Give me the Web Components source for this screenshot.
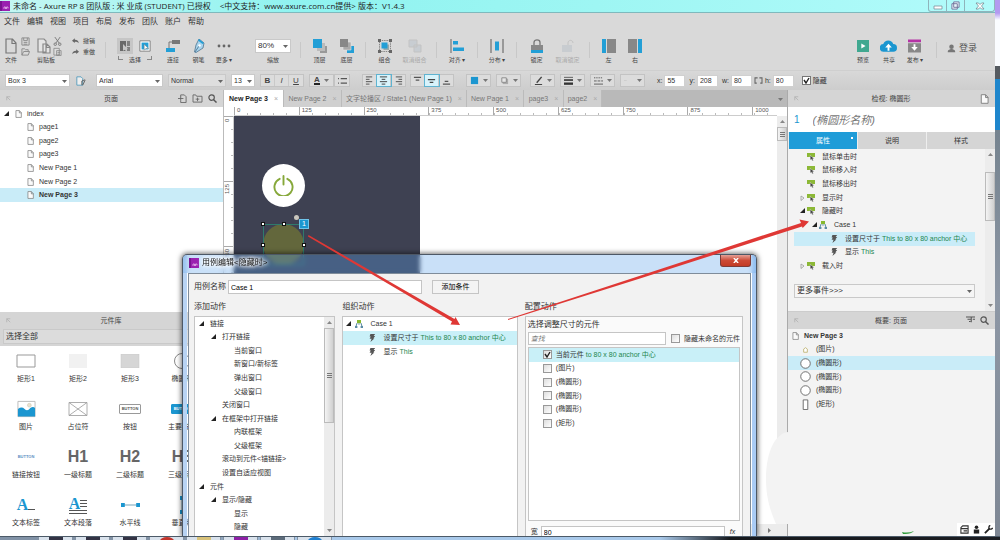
<!DOCTYPE html>
<html lang="zh-CN">
<head>
<meta charset="utf-8">
<title>未命名 - Axure RP 8</title>
<style>
  body { margin: 0; font: 7px/10px "Liberation Sans", "Noto Sans CJK SC", sans-serif; color: #333; background: #d9d9d9; }
</style>
</head>
<body>
<rp-shell></rp-shell>
<script>
const ICONS = {
  page: ['0 0 12 14', '<path d="M1.500 1h6l3.500 3.500V13h-9.500zM7.500 1v4H11" fill="#fafafa" stroke="#777" stroke-width="1.200"/>'],
  doc: ['0 0 12 16', '<path d="M1 1h6.500L11 5v10H1zM7 1v4.500h4" fill="none" stroke="#777" stroke-width="1.200"/>'],
  save: ['0 0 10 10', '<path d="M1 1h8v8H1zM3 1v3h4V1M3 6h4M3 8h4" fill="none" stroke="#888"/>'],
  open: ['0 0 10 10', '<path d="M1 9V2h3l1 1h3v2M1 9l2-4h6.500L8 9z" fill="none" stroke="#888"/>'],
  clip: ['0 0 14 16', '<path d="M1 1h6l2 2v11H1zM6 6h4l3 3v6H6zM9.500 6v3.500H13" fill="#e4e4e4" stroke="#888" stroke-width="1.200"/>'],
  cut: ['0 0 10 10', '<path d="M2 0l5 7M8 0L3 7" stroke="#777"/><circle cx="2.500" cy="8" r="1.400" fill="none" stroke="#777"/><circle cx="7.500" cy="8" r="1.400" fill="none" stroke="#777"/>'],
  paste: ['0 0 10 10', '<path d="M1 1.500h6V9H1zM4 4h5v5.500H4zM5 6h3M5 8h3" fill="#ddd" stroke="#888" stroke-width=".9"/>'],
  undo: ['0 0 10 8', '<path d="M4 0v2.200c4 0 5.500 2 5.500 5C8 5.500 7 5 4 5v2L0 3.500z" fill="#666"/>'],
  redo: ['0 0 10 8', '<path d="M6 0v2.200C2 2.200.5 4 .5 7.200 2 5.500 3 5 6 5v2l4-3.500z" fill="#666"/>'],
  selcross: ['0 0 16 16', '<path d="M0 0h16v16H0z" fill="#c6c6c6"/><path d="M3 3h6v10H3z" fill="#696969"/><path d="M10 3h3v5h-3zM10 9h3v4h-3z" fill="#808080"/><path d="M6 6l5 5-2 .3 1 2-1 .5-1-2-2 1z" fill="#c6c6c6"/>'],
  selin: ['0 0 14 14', '<path d="M1 1h12v12H1z" fill="#fff" stroke="#777"/><path d="M3 3h8v8H3z" fill="#239fd6"/><path d="M6 5l5 5H8l-2 2z" fill="#fff" stroke="#777" stroke-width=".6"/>'],
  connect: ['0 0 14 14', '<path d="M6 1h8v4H6z" fill="#777"/><path d="M0 9h9v4H0z" fill="#239fd6"/><path d="M6 3H3v6" fill="none" stroke="#777"/>'],
  pen: ['0 0 12 14', '<path d="M6 0l5 4-1 5-7 4.500L1.500 13 3 6z" fill="#a9d5ee" stroke="#5a7f99" stroke-width=".9"/><path d="M2 13l4-6" stroke="#5a7f99"/><circle cx="6.500" cy="6.500" r="1.200" fill="#fff"/><path d="M6 0l5 4-1.500 1L5 1.500z" fill="#239fd6"/>'],
  dots: ['0 0 14 4', '<circle cx="2" cy="2" r="1.400" fill="#666"/><circle cx="7" cy="2" r="1.400" fill="#666"/><circle cx="12" cy="2" r="1.400" fill="#666"/>'],
  front: ['0 0 14 14', '<path d="M7 7h7v7H7z" fill="#999"/><path d="M4 4h8v8H4z" fill="#bbb"/><path d="M0 0h9v9H0z" fill="#239fd6"/>'],
  back: ['0 0 14 14', '<path d="M7 7h7v7H7z" fill="#239fd6"/><path d="M3 3h8v8H3z" fill="#aaa" stroke="#e6e6e6" stroke-width=".6"/><path d="M0 0h8v8H0z" fill="#888"/>'],
  group: ['0 0 14 14', '<path d="M1.500 1.500h11v11h-11z" fill="none" stroke="#888" stroke-dasharray="1.500 .8"/><path d="M5.500 5.500H11V11H5.500z" fill="#9aa"/><path d="M3.500 3.500h6v6h-6z" fill="#239fd6"/><path d="M0 0h3v3H0zM11 0h3v3h-3zM0 11h3v3H0zM11 11h3v3h-3z" fill="#666"/>'],
  ungroup: ['0 0 14 14', '<path d="M1 1h8v7H1zM6 6h7v7H6z" fill="#c8cdd2" stroke="#c3c3c3"/>'],
  align: ['0 0 14 14', '<path d="M1 0v14" stroke="#777" stroke-width="1.200"/><path d="M3 2h5v3.500H3zM3 8.500h11V12H3z" fill="#239fd6"/>'],
  dist: ['0 0 14 14', '<path d="M1 0v14M13 0v14" stroke="#777" stroke-width="1.300"/><path d="M5 2.500h4v9H5z" fill="#239fd6"/>'],
  lock: ['0 0 12 14', '<path d="M3 7V3.500C3 0 9 0 9 3.500V7" fill="none" stroke="#777" stroke-width="1.300"/><path d="M0 6h12v5H0z" fill="#888"/><path d="M0 11h12v3H0z" fill="#239fd6"/>'],
  unlock: ['0 0 14 14', '<path d="M7 7V4c0-3.500 5-3.500 5 0" fill="none" stroke="#c3c3c3"/><path d="M1 6h10v7H1z" fill="#c8ccd0"/>'],
  left: ['0 0 14 14', '<path d="M0 0h4v14H0z" fill="#239fd6"/><path d="M5 0h9v14H5z" fill="#888"/>'],
  right: ['0 0 14 14', '<path d="M10 0h4v14h-4z" fill="#239fd6"/><path d="M0 0h9v14H0z" fill="#888"/>'],
  play: ['0 0 14 14', '<path d="M0 0h14v14H0z" fill="#40a890"/><path d="M5 4l5 3-5 3z" fill="#fff"/>'],
  cloud: ['0 0 18 14', '<path d="M4 13a4 4 0 0 1-.5-8A5.500 5.500 0 0 1 14 5a4 4 0 0 1 0 8z" fill="#1b96d0"/><path d="M9 4.500l3.500 4H10V12H8V8.500H5.500z" fill="#fff"/>'],
  publish: ['0 0 14 14', '<path d="M0 0h14v3H0z" fill="#b533a5"/><path d="M0 4h14v10H0z" fill="#888"/><path d="M6 5h2v3h2.500L7 12 3.500 8H6z" fill="#fff"/>'],
  user: ['0 0 12 12', '<circle cx="6" cy="3.500" r="3" fill="#777"/><path d="M1 11c0-3.500 2-3.500 4-4.500h2c2 1 4 1 4 4.500z" fill="#777"/>'],
  style: ['0 0 12 12', '<path d="M1 1h5l2 2v8H1z" fill="#eee" stroke="#4a98bb"/><path d="M7 11V6l4-1.500M11 5L8 11" fill="none" stroke="#555"/>'],
  swatch: ['0 0 10 10', '<path d="M1 1h8v8H1z" fill="#1b96d0"/>'],
  shadow: ['0 0 10 10', '<path d="M3 3h6v6H3z" fill="#aaa"/><path d="M2 2h5v5H2z" fill="#e6e6e6" stroke="#888"/>'],
  pencil: ['0 0 10 10', '<path d="M1 9.500h8" stroke="#444" stroke-width="1.200"/><path d="M3 7.500L8.500 1" stroke="#444" stroke-width="1.600"/>'],
  weight: ['0 0 10 10', '<path d="M0 1.500h10" stroke="#555"/><path d="M0 4.500h10" stroke="#444" stroke-width="2"/><path d="M0 8.500h10" stroke="#333" stroke-width="2.600"/>'],
  dash: ['0 0 10 10', '<path d="M0 2h10" stroke="#555" stroke-dasharray="1.500 1"/><path d="M0 5.500h10" stroke="#555" stroke-dasharray="3 1"/><path d="M0 9h10" stroke="#555"/>'],
  none: ['0 0 10 10', '<path d="M0 5h3" stroke="#ccc"/>'],
  bullets: ['0 0 10 10', '<path d="M0 3h1M0 8h1M3 3h7M3 8h7" stroke="#555" stroke-width="1.300"/>'],
  al: ['0 0 10 10', '<path d="M1 1h7M1 3.700h4M1 6.300h7M1 9h4" stroke="#555" stroke-width="1.100"/>'],
  ac: ['0 0 10 10', '<path d="M1 1h8M3 3.700h4M1 6.300h8M3 9h4" stroke="#444" stroke-width="1.100"/>'],
  ar: ['0 0 10 10', '<path d="M2 1h7M5 3.700h4M2 6.300h7M5 9h4" stroke="#555" stroke-width="1.100"/>'],
  vt: ['0 0 10 10', '<path d="M1 1.500h8M3 4.500h4" stroke="#555" stroke-width="1.300"/>'],
  vm: ['0 0 10 10', '<path d="M1 4h8M3 7h4" stroke="#444" stroke-width="1.300"/>'],
  vb: ['0 0 10 10', '<path d="M3 6h4M1 9h8" stroke="#555" stroke-width="1.300"/>'],
  link: ['0 0 10 8', '<path d="M3 1H1v6h2M7 1h2v6H7M3 1h1M6 1h1" fill="none" stroke="#666" stroke-width="1.200"/>'],
  search: ['0 0 10 10', '<circle cx="4" cy="4" r="3" fill="none" stroke="#555" stroke-width="1.300"/><path d="M6 6l3.500 3.500" stroke="#555" stroke-width="1.600"/>'],
  addpage: ['0 0 10 10', '<path d="M3 1h4l2 2v6.500H3V7M3 3.500V1" fill="none" stroke="#666"/><path d="M0 5h6M3 3v4" stroke="#666"/>'],
  addfolder: ['0 0 12 10', '<path d="M1 9V1h3l1 1.500h6V9z" fill="none" stroke="#666"/><path d="M4 5.700h4M6 4v4" stroke="#666"/>'],
  filter: ['0 0 12 10', '<path d="M0 1h12M2 4h5M7 1v7M9 4h3M4 7h2" stroke="#555" stroke-width="1.400"/>'],
  collapse: ['0 0 8 8', '<path d="M2 6V2h4M2 2l4 4" fill="none" stroke="#b4b4b4"/>'],
  event: ['0 0 10 10', '<path d="M0 0h10v5H0z" fill="#8cb836"/><path d="M4 3l5 4-2 .3 1 2-1.500.5-1-2-1.500 1z" fill="#444" stroke="#f3f3f3" stroke-width=".5"/>'],
  case: ['0 0 10 10', '<path d="M2.500 0h5v4h-5z" fill="#86b82e"/><path d="M2.500 4L1 9M7.500 4L9 9M5 4v2" stroke="#5b8ba5" stroke-width="1.300"/><path d="M0 7.500h3V10H0zM7 7.500h3V10H7z" fill="#5b8ba5"/>'],
  bolt: ['0 0 10 10', '<path d="M3 0h6L7 2.500h2L6.500 5.500H8L3 10l1.500-4H2l1.500-3H2z" fill="#555"/>'],
  circle: ['0 0 12 12', '<circle cx="6" cy="6" r="5.200" fill="#fff" stroke="#666"/>'],
  rect: ['0 0 12 12', '<path d="M3.500 1h5v10.500h-5z" fill="#fff" stroke="#666"/>'],
  home: ['0 0 12 12', '<path d="M4 9V5.500L6 4l2 1.500V9z" fill="#fff" stroke="#c2b77a"/>'],
  card: ['0 0 10 10', '<path d="M1 3l2-2h6v8H1zM1 4h8M4 6.500h4" fill="none" stroke="#333" stroke-width="1.200"/>'],
  person: ['0 0 10 10', '<circle cx="5" cy="2.500" r="2" fill="#222"/><path d="M2 5h6v4.500H2z" fill="#222"/>'],
  wrench: ['0 0 10 10', '<path d="M1 9l5-5" stroke="#222" stroke-width="2"/><path d="M7 .5C5 1 5 4 6.500 4.500S9.500 4 9.500 3" fill="none" stroke="#222" stroke-width="1.500"/>'],
  logo: ['0 0 10 10', '<path d="M0 0h10v10H0z" fill="#9a21b0"/><path d="M0 0h2v10H0z" fill="#7a1590"/><path d="M4 8V6h1.500v2M6.500 8V6H8v1.500" fill="none" stroke="#e7b8ee" stroke-width=".8"/>'],
  wBox1: ['0 0 20 14', '<path d="M1 1h18v12H1z" fill="#fff" stroke="#999"/>'],
  wBox2: ['0 0 20 14', '<path d="M1 0h18v14H1z" fill="#f1f1f1"/>'],
  wBox3: ['0 0 20 14', '<path d="M1 0h18v14H1z" fill="#d6d6d6" stroke="#c4c4c4" stroke-width=".5"/>'],
  wOval: ['0 0 20 16', '<circle cx="10" cy="8" r="7.500" fill="#fff" stroke="#888"/>'],
  wImage: ['0 0 20 18', '<path d="M1 1h18v16H1z" fill="#fff" stroke="#bbb"/><circle cx="13" cy="5" r="2" fill="#e9e2cf" stroke="#c9c0a8" stroke-width=".5"/><path d="M1 17v-8q4-3 7 0t6-1q3-2 5 0v9z" fill="#1b96d0"/>'],
  wHold: ['0 0 20 14', '<path d="M1 .5h18v13H1zM1 .5l18 13M19 .5L1 13.500" fill="#fff" stroke="#999" stroke-width=".8"/>'],
  wLine: ['0 0 20 6', '<path d="M2 3h16" stroke="#6f9fb5"/><path d="M0 1h4v4H0zM16 1h4v4h-4z" fill="#1b96d0"/>'],
  wVert: ['0 0 20 18', '<path d="M10 1v16" stroke="#6f9fb5"/><path d="M8 0h4v4H8zM8 14h4v4H8z" fill="#1b96d0"/>'],
  power: ['0 0 22 22', '<path d="M7 4a9.500 9.500 0 1 0 8 0" fill="none" stroke="#86a83a" stroke-width="2" stroke-linecap="round"/><path d="M11 1v9" stroke="#86a83a" stroke-width="2" stroke-linecap="round"/>'],
  min: ['0 0 10 8', '<path d="M1 4h8v3H1z" fill="#fff" stroke="#7f8f9a" stroke-width=".8"/>'],
  restore: ['0 0 10 10', '<path d="M3 1h6v6H3zM1 3h6v6H1z" fill="#e7f7fb" stroke="#716f98"/>'],
  close: ['0 0 10 8', '<path d="M1 1h2.500L5 2.500 6.500 1H9L6.500 4 9 7H6.500L5 5.500 3.500 7H1l2.500-3z" fill="#fff" stroke="#6a7f88" stroke-width=".7"/>'],
  closew: ['0 0 10 8', '<path d="M1.500 1h2L5 2.500 6.500 1h2L6.300 4l2.200 3h-2L5 5.500 3.500 7h-2l2.200-3z" fill="#fff"/>']
};

/* Registers an element whose shadow root is built from its styles and its markup. */
function element(name, css, markup) {
  customElements.define(name, class extends HTMLElement {
    connectedCallback() {
      if (this.shadowRoot) return;
      const t = document.createElement('template');
      const a = (k, d = '') => this.getAttribute(k) ?? d;
      t.innerHTML = `<style>*{box-sizing:border-box}${css}</style>` + (typeof markup === 'function' ? markup(a) : markup);
      this.attachShadow({ mode: 'open' }).append(t.content.cloneNode(true));
    }
  });
}

element('rp-icon', `:host{display:inline-block;flex:none}svg{display:block}`,
  a => { const [vb, body] = ICONS[a('name')]; return `<svg width="${a('w', 10)}" height="${a('h', a('w', 10))}" viewBox="${vb}" aria-hidden="true">${body}</svg>`; });

element('rp-combo', `
  :host{display:block;flex:none;position:relative;height:14px}
  select{appearance:none;display:block;width:100%;height:100%;margin:0;padding:0 8px 0 2px;border:1px solid #c9c9c9;border-radius:0;background:var(--fill,#fff);font:inherit;font-size:var(--size,7px);color:#333}
  svg{position:absolute;right:3px;top:calc(50% - 1px);pointer-events:none}`,
  a => `<select aria-label="${a('label')}"><option>${a('value')}</option></select><svg width="5" height="3"><path d="M0 0h5L2.500 3z" fill="#666"/></svg>`);

element('rp-title', `
  :host{display:flex;align-items:center;height:13px;border-bottom:1px solid #7fb9bd;background:linear-gradient(90deg,#c5f7f3,#8ff3f0 30%,#9ef6f3 60%,#b2fbfb);font:8px/12px "Open Sans","Noto Sans CJK SC",sans-serif;color:#222}
  .t{margin-left:3px;white-space:pre}.s{margin-left:9px;white-space:pre}
  .b{margin-left:auto;display:flex;height:12px;border:1px solid #8fb4bb;border-top:0;border-radius:0 0 3px 3px}
  button{border:0;border-right:1px solid #8fb4bb;background:none;padding:0;width:18px;display:flex;align-items:center;justify-content:center}
  button:last-child{width:29px;border:0}`,
  `<rp-icon name="logo" w="10" h="12"></rp-icon><span class="t">未命名 - Axure RP 8 团队版 : 米 业成 (STUDENT) 已授权</span><span class="s">&lt;中文支持：www.axure.com.cn提供&gt; 版本：V1.4.3</span>
   <div class="b"><button aria-label="最小化"><rp-icon name="min" w="10" h="8"></rp-icon></button><button aria-label="还原"><rp-icon name="restore" w="9"></rp-icon></button><button aria-label="关闭"><rp-icon name="close" w="10" h="8"></rp-icon></button></div>`);

element('rp-menu', `:host{display:flex;gap:7px;padding-left:4px;height:17px;font-size:8px;line-height:17px}a{color:#333;text-decoration:none}`,
  ['文件', '编辑', '视图', '项目', '布局', '发布', '团队', '账户', '帮助'].map(m => `<a href="#">${m}</a>`).join(''));

element('rp-tool', `
  :host{flex:none;display:block}
  button{width:100%;height:28px;padding:0;border:0;background:none;font:inherit;font-size:6px;line-height:8px;color:#444;display:flex;flex-direction:column;align-items:center;justify-content:space-between;white-space:nowrap}
  :host([off]) button{color:#aaa}.i{display:flex;align-items:center;justify-content:center;flex:1}`,
  a => `<button><span class="i"><rp-icon name="${a('icon')}" w="${a('iw', 14)}" h="${a('ih', 14)}"></rp-icon></span><slot></slot></button>`);

element('rp-toolbar', `
  :host{display:flex;height:40px;padding:6px 0 6px 5px;font-size:6px;line-height:8px;color:#444}
  .sep{width:1px;height:16px;margin:6px 5px 0;background:#c8c8c8}
  .pair{width:32px;display:grid;grid-template-columns:16px 12px;grid-template-rows:10px 10px 8px;align-items:center}
  .pair .big{grid-row:1/3}.pair .l{grid-column:1/3}
  .undo{margin-left:3px;width:28px;display:grid;grid-template-rows:10px 10px;gap:1px;align-content:start}
  .undo button{display:flex;gap:4px;align-items:center;border:0;background:none;padding:0;font:inherit;color:inherit}
  .sel{width:40px;margin:0 5px 0 4px;display:grid;grid-template-columns:1fr 1fr;grid-template-rows:20px 8px;justify-items:center;align-items:center}
  .sel .l{grid-column:1/3;display:flex;gap:6px}
  .sel i{width:5px;height:4px;border:1px solid #888;border-width:0 0 1px 1px}.sel i+span+i{border-width:0 1px 1px 0}
  .zoom{width:36px;margin:0 4px 0 18px;display:flex;flex-direction:column;justify-content:space-between;align-items:center}
  rp-combo{width:100%;margin-top:3px;--size:8px}
  .sp{flex:1}
  .login{display:flex;align-items:center;gap:3px;height:24px;margin:0 18px 0 5px;padding:0;border:0;background:none;font:inherit;font-size:9px;color:#555}`,
  `<div class="pair"><rp-icon class="big" name="doc" w="12" h="16"></rp-icon><rp-icon name="save" w="9"></rp-icon><rp-icon name="open" w="9"></rp-icon><span class="l">文件</span></div>
   <div class="pair"><rp-icon class="big" name="clip" w="14" h="16"></rp-icon><rp-icon name="cut" w="9"></rp-icon><rp-icon name="paste" w="9"></rp-icon><span class="l">剪贴板</span></div>
   <div class="undo"><button><rp-icon name="undo" w="7" h="6"></rp-icon>撤销</button><button><rp-icon name="redo" w="7" h="6"></rp-icon>重做</button></div>
   <div class="sep"></div>
   <div class="sel"><rp-icon name="selcross" w="16"></rp-icon><rp-icon name="selin" w="12"></rp-icon><span class="l"><i></i><span>选择</span><i></i></span></div>
   <rp-tool style="width:26px" icon="connect">连接</rp-tool><rp-tool style="width:25px" icon="pen" iw="12">钢笔</rp-tool><rp-tool style="width:26px" icon="dots" ih="4">更多 ▾</rp-tool>
   <div class="zoom"><rp-combo label="缩放" value="80%"></rp-combo><span>缩放</span></div>
   <div class="sep"></div>
   <rp-tool style="width:27px" icon="front">顶层</rp-tool><rp-tool style="width:27px" icon="back">底层</rp-tool>
   <div class="sep"></div>
   <rp-tool style="width:27px" icon="group">组合</rp-tool><rp-tool off style="width:33px" icon="ungroup">取消组合</rp-tool>
   <div class="sep"></div>
   <rp-tool style="width:30px" icon="align">对齐 ▾</rp-tool>
   <div class="sep"></div>
   <rp-tool style="width:28px" icon="dist">分布 ▾</rp-tool>
   <div class="sep"></div>
   <rp-tool style="width:29px" icon="lock" iw="12">锁定</rp-tool><rp-tool off style="width:33px" icon="unlock">取消锁定</rp-tool>
   <div class="sep"></div>
   <rp-tool style="width:27px" icon="left">左</rp-tool><rp-tool style="width:26px" icon="right">右</rp-tool>
   <div class="sp"></div>
   <rp-tool style="width:26px" icon="play" iw="12" ih="12">预览</rp-tool><rp-tool style="width:26px" icon="cloud" iw="17">共享</rp-tool><rp-tool style="width:26px" icon="publish" iw="13">发布 ▾</rp-tool>
   <div class="sep" style="margin-left:8px"></div>
   <button class="login"><rp-icon name="user" w="9"></rp-icon>登录</button>`);

element('rp-format', `
  :host{display:flex;align-items:center;height:20px;padding:0 0 0 5px;border-top:1px solid #cfcfcf;background:linear-gradient(#d8d8d8,#cdcdcd);white-space:nowrap}
  rp-combo{height:13px}.gray{--fill:#dedede}
  .g{display:flex;height:13px;border:1px solid #c3c3c3;background:#dcdcdc}
  .g button{width:14px;border:0;border-right:1px solid #c9c9c9;background:none;padding:0;display:flex;align-items:center;justify-content:center;font:8px/11px "Liberation Sans",sans-serif;color:#444}
  .g button:last-child{border-right:0}
  .g .on{background:#d8f3fb;box-shadow:0 0 0 1px #5fb3d0}
  .d button{width:23px;gap:4px}.d svg{display:block}
  label{display:flex;align-items:center;gap:2px;font-size:7px}
  label input:not([type]){width:21px;height:12px;border:1px solid #d0d0d0;padding:0 2px;margin:0;font:inherit;color:#333;background:#fff}
  [type=checkbox]{appearance:none;width:9px;height:9px;margin:0;border:1px solid #777;background:#fff}
  .ck{position:relative;display:flex}.ck svg{position:absolute;left:1px;top:1px;pointer-events:none}`,
  () => {
    const dd = (n, m = 5) => `<div class="g d" style="margin-left:${m}px"><button aria-label="${n}"><rp-icon name="${n}" w="9"></rp-icon><svg width="5" height="3"><path d="M0 0h5L2.500 3z" fill="#777"/></svg></button></div>`;
    const bt = (n, on) => `<button aria-label="${n}"${on ? ' class="on"' : ''}><rp-icon name="${n}" w="9"></rp-icon></button>`;
    const f = (l, v, m) => `<label style="margin-left:${m}px">${l}<input value="${v}"></label>`;
    return `<rp-combo style="width:65px" label="样式" value="Box 3"></rp-combo>
    <rp-icon style="margin:0 10px 0 6px" name="style" w="10"></rp-icon>
    <rp-combo style="width:67px" label="字体" value="Arial"></rp-combo>
    <rp-combo class="gray" style="width:58px;margin-left:5px" label="字重" value="Normal"></rp-combo>
    <rp-combo style="width:24px;margin-left:5px" label="字号" value="13"></rp-combo>
    <div class="g" style="margin-left:5px"><button><b>B</b></button><button><i>I</i></button><button><u>U</u></button></div>
    <div class="g d" style="margin-left:5px"><button aria-label="文字颜色"><b style="border-bottom:2px solid #222;line-height:7px">A</b><svg width="5" height="3"><path d="M0 0h5L2.500 3z" fill="#777"/></svg></button></div>
    <div class="g">${bt('bullets')}</div>
    <div class="g" style="margin-left:12px">${bt('al') + bt('ac', 1) + bt('ar')}</div>
    <div class="g" style="margin-left:4px">${bt('vt') + bt('vm', 1) + bt('vb')}</div>
    ${dd('swatch', 12) + dd('shadow') + dd('pencil', 9) + dd('weight') + dd('dash') + dd('none')}
    ${f('x:', '55', 12) + f('y:', '208', 4) + f('w:', '80', 4)}<rp-icon style="margin-left:2px" name="link" w="9" h="7"></rp-icon>${f('h:', '80', 2)}
    <label style="margin-left:8px"><span class="ck"><input type="checkbox" checked><svg width="7" height="7"><path d="M1 3l2 3 3-5" fill="none" stroke="#222" stroke-width="1.400"/></svg></span>隐藏</label>`;
  });

element('rp-head', `:host{display:grid;grid-template-columns:1fr auto 1fr;align-items:center;height:17px;padding:0 6px 0 5px;background:#d5d5d5;color:#444;flex:none}.r{display:flex;gap:5px;justify-content:flex-end}`,
  `<rp-icon name="collapse" w="7"></rp-icon><slot></slot><span class="r"><slot name="tools"></slot></span>`);

element('rp-row', `
  :host{display:flex;align-items:center;white-space:nowrap;min-height:0;line-height:10px}
  :host([on]){background:var(--hot,#c9ecf8)}:host([bold]){font-weight:bold}
  .c{width:var(--cw,6px);margin-right:var(--g1,5px);flex:none}.c svg{display:block}
  rp-icon{margin-right:var(--g2,5px)}::slotted(em){font-style:normal;color:#23864e;margin-left:2px}`,
  a => `<span class="c" style="margin-left:${a('pad', 0)}px">${a('caret') === 'open' ? '<svg width="6" height="6"><path d="M5 0v5H0z" fill="#222"/></svg>' : a('caret') ? '<svg width="5" height="6"><path d="M1 1l3 2-3 2.500z" fill="none" stroke="#999" stroke-width=".8"/></svg>' : ''}</span>${a('icon') ? `<rp-icon name="${a('icon')}" w="${a('iw', 8)}" h="${a('ih', 8)}"></rp-icon>` : ''}<slot></slot>`);

element('rp-scroll', `
  :host{display:flex;flex-direction:column;align-items:center;width:10px;flex:none;background:#ececec}
  i{width:100%;box-sizing:border-box;border:1px solid #bbb;background:linear-gradient(90deg,#f4f4f4,#d0d0d0);display:flex;align-items:center;justify-content:center}
  .d{margin-top:auto}svg{display:block;flex:none;margin:4px 0}`,
  a => `<svg width="5" height="3"><path d="M0 3h5L2.500 0z" fill="#888"/></svg><i style="margin-top:${a('top', 0)}px;height:${a('thumb')}px"><svg width="5" height="5"><path d="M0 .5h5M0 2.500h5M0 4.500h5" stroke="#777"/></svg></i><svg class="d" width="5" height="3"><path d="M0 0h5L2.500 3z" fill="#888"/></svg>`);

element('rp-pages', `:host{display:flex;flex-direction:column;height:222px;background:#fff}.t{display:grid;grid-auto-rows:1fr;height:95px}`,
  `<rp-head>页面<rp-icon slot="tools" name="addpage" w="9"></rp-icon><rp-icon slot="tools" name="addfolder" w="11" h="9"></rp-icon><rp-icon slot="tools" name="search" w="9"></rp-icon></rp-head>
   <div class="t"><rp-row pad="4" caret="open" icon="page" iw="7">index</rp-row>${['page1', 'page2', 'page3', 'New Page 1', 'New Page 2'].map(p => `<rp-row pad="16" icon="page" iw="7">${p}</rp-row>`).join('')}<rp-row pad="16" icon="page" iw="7" on bold>New Page 3</rp-row></div>`);

element('rp-lib', `
  :host{display:flex;flex-direction:column;flex:1;min-height:0;overflow:hidden;background:#fff}
  .s{background:#d5d5d5;padding:0 0 2px 3px}rp-combo{height:15px;--fill:#dcdcdc;--size:8px}
  .g{display:grid;grid-template-columns:repeat(4,52px);grid-auto-rows:48px}
  .w{display:flex;flex-direction:column;align-items:center;padding-top:3px;white-space:nowrap}
  .p{height:24px;display:flex;align-items:center;justify-content:center;margin-bottom:1px}
  .h{font:bold 16px/20px "Liberation Sans",sans-serif;color:#666}
  .b{font-size:4px;line-height:8px;font-weight:bold;padding:0 2px;border:1px solid #999;color:#555;border-radius:1px}
  .b.p2{background:#1b96d0;border-color:#1b96d0;color:#fff}.b.p3{border-color:transparent;color:#5d8fc4}
  .a{font:bold 16px/16px "Liberation Serif",serif;color:#1b96d0}
  .a u{display:inline-block;width:7px;height:1px;background:#555}
  .a.par{line-height:13px;height:17px;padding-bottom:3px;border-bottom:1px solid #555;background:linear-gradient(#555,#555) 0 13px/100% 1px no-repeat}
  .a svg{display:inline-block;vertical-align:-1px}`,
  () => {
    const ic = (n, w, h) => `<rp-icon name="${n}" w="${w}" h="${h}"></rp-icon>`;
    const items = [
      [ic('wBox1', 20, 14), '矩形1'], [ic('wBox2', 20, 14), '矩形2'], [ic('wBox3', 20, 14), '矩形3'], [ic('wOval', 20, 16), '椭圆形'],
      [ic('wImage', 19, 18), '图片'], [ic('wHold', 20, 14), '占位符'], ['<span class="b">BUTTON</span>', '按钮'], ['<span class="b p2">BUTTON</span>', '主要按钮'],
      ['<span class="b p3">BUTTON</span>', '链接按钮'], ['<span class="h">H1</span>', '一级标题'], ['<span class="h">H2</span>', '二级标题'], ['<span class="h">H3</span>', '三级标题'],
      ['<span class="a">A<u></u></span>', '文本标签'], ['<span class="a par">A<svg width="7" height="10"><path d="M0 .5h7M0 3.500h7M0 6.500h7" stroke="#555"/></svg></span>', '文本段落'], [ic('wLine', 19, 6), '水平线'], [ic('wVert', 20, 18), '垂直线']];
    return `<rp-head>元件库</rp-head><div class="s"><rp-combo label="元件库" value="选择全部"></rp-combo></div><div class="g">${items.map(([p, l]) => `<div class="w"><div class="p">${p}</div>${l}</div>`).join('')}</div>`;
  });

element('rp-tabs', `
  :host{display:flex;height:17px;background:#b9b9b9;flex:none}
  button{border:0;border-right:1px solid #bbb;background:#d0d0d0;padding:0;font:inherit;color:#777;display:flex;align-items:center;justify-content:center;gap:6px;white-space:nowrap}
  button.on{background:#fff;color:#222;font-weight:bold}s{text-decoration:none;color:#aaa;font-weight:normal}
  svg{margin:8px 4px 0 auto}`,
  () => [['New Page 3', 60, 1], ['New Page 2', 58], ['文字轮播区 / State1 (New Page 1)', 125], ['New Page 1', 57], ['page3', 40], ['page2', 38]]
    .map(([t, w, on]) => `<button style="width:${w}px"${on ? ' class="on"' : ''}>${t}<s>×</s></button>`).join('') + '<svg width="5" height="3"><path d="M0 0h5L2.500 3z" fill="#777"/></svg>');

element('rp-canvas', `
  :host{display:flex;flex-direction:column;background:#fff;min-width:0;flex:1;border-right:1px solid #aaa;border-left:1px solid #bbb}
  .work{flex:1;min-height:0;display:grid;grid-template:9px 1fr / 10px 1fr 10px;background:#fff}
  .r{overflow:hidden;color:#555;font-size:6px;line-height:7px}
  .h{grid-column:2;background:repeating-linear-gradient(90deg,#bbb 0 1px,transparent 1px 13px) 0 100%/100% 2px no-repeat;border-bottom:1px solid #ccc}
  .h div{display:grid;grid-template-columns:repeat(9,1fr);width:583px}.h span{border-left:1px solid #aaa;padding-left:2px;height:8px}
  .v{grid-column:1;background:repeating-linear-gradient(#bbb 0 1px,transparent 1px 13px) 100% 0/2px 100% no-repeat;border-right:1px solid #ccc}
  .v div{display:grid;grid-auto-rows:65px}.v span{writing-mode:vertical-rl;transform:rotate(180deg);text-align:right;padding-bottom:2px;border-bottom:1px solid #aaa}
  .stage{position:relative;overflow:hidden}
  .art{width:186px;height:100%;background:#3e4152}
  .art>*{position:absolute}
  .pw{left:28px;top:48px;width:43px;height:43px;border-radius:50%;background:#fff;display:grid;place-items:center}
  .ov{left:29px;top:108px;width:41px;height:41px;border-radius:50%;background:#63673c}
  .bx{left:29px;top:108px;width:41px;height:41px;border:1px solid #2f7a6c}
  .k{width:4px;height:4px;background:#fff;border:1px solid #111}
  .dot{left:60px;top:99px;width:5px;height:5px;border-radius:50%;background:#c9c6bd}
  .n{left:65px;top:103px;width:10px;height:10px;background:#1b96d0;border:1px solid #6fc4ea;color:#fff;font-size:7px;line-height:8px;text-align:center}
  .foot{display:flex;align-items:center;justify-content:flex-end;height:12px;background:#ececec;flex:none;padding-right:16px}`,
  `<rp-tabs></rp-tabs><div class="work"><span></span><div class="r h"><div>${[0, 125, 250, 375, 500, 625, 750, 875, 1000].map(n => `<span>${n}</span>`).join('')}</div></div><span></span>
   <div class="r v"><div>${[0, 125, 250].map(n => `<span>${n}</span>`).join('')}</div></div>
   <div class="stage"><div class="art"><div class="pw"><rp-icon name="power" w="21"></rp-icon></div><div class="ov"></div><div class="bx"></div>
   ${[[27, 106], [48, 106], [27, 127], [68, 127]].map(([x, y]) => `<div class="k" style="left:${x}px;top:${y}px"></div>`).join('')}<div class="dot"></div><div class="n">1</div></div></div>
   <rp-scroll thumb="14"></rp-scroll></div><div class="foot"><svg width="3" height="5"><path d="M0 0v5l3-2.500z" fill="#777"/></svg></div>`);

const action = '设置尺寸于<em>This to 80 x 80 anchor 中心</em>';

element('rp-inspect', `
  :host{display:flex;flex-direction:column;height:222px;background:#f3f3f3}
  .name{display:flex;align-items:center;gap:13px;height:25px;background:#fff;padding-left:6px;font-size:11px}
  .name b{color:#1b96d0;font-size:10px;font-weight:normal}
  .name input{border:0;padding:0;margin:0;width:150px;font:italic 11px/16px "Liberation Sans","Noto Sans CJK SC",sans-serif;background:none}
  input::placeholder{color:#777}
  .tabs{display:grid;grid-template-columns:69px 1fr 1fr;height:17px}
  .tabs button{border:0;border-left:1px solid #eee;padding:0;background:#d5d5d5;font:inherit;color:#333}
  .tabs .on{background:#1f9cd8;color:#fff;position:relative}.on::after{content:"";position:absolute;right:4px;top:5px;width:2px;height:2px;background:#fff}
  .b{flex:1;display:flex;min-height:0;border-bottom:1px solid #ccc}.l{flex:1;padding:1px 10px 0 6px;min-width:0}
  .t{display:grid;grid-auto-rows:1fr;height:123px;--g1:1px;--g2:7px}
  rp-combo{margin-top:11px;--fill:#f5f5f5;--size:8px}`,
  `<rp-head>检视: 椭圆形<rp-icon slot="tools" name="page" w="9" h="10"></rp-icon></rp-head>
   <div class="name"><b>1</b><input aria-label="名称" placeholder="(椭圆形名称)"></div>
   <div class="tabs"><button class="on">属性</button><button>说明</button><button>样式</button></div>
   <div class="b"><div class="l"><div class="t">
   <rp-row pad="6" icon="event">鼠标单击时</rp-row><rp-row pad="6" icon="event">鼠标移入时</rp-row><rp-row pad="6" icon="event">鼠标移出时</rp-row>
   <rp-row pad="6" caret="shut" icon="event">显示时</rp-row><rp-row pad="6" caret="open" icon="event">隐藏时</rp-row><rp-row pad="18" caret="open" icon="case">Case 1</rp-row>
   <rp-row pad="29" icon="bolt" on>${action}</rp-row><rp-row pad="29" icon="bolt">显示<em>This</em></rp-row><rp-row pad="6" caret="shut" icon="event">载入时</rp-row></div>
   <rp-combo label="更多事件" value="更多事件&gt;&gt;&gt;"></rp-combo></div><rp-scroll top="12" thumb="49"></rp-scroll></div>`);

element('rp-outline', `
  :host{display:flex;flex-direction:column;flex:1;min-height:0;background:#f3f3f3}
  .t{display:grid;grid-auto-rows:1fr;height:82px;--cw:0px;--g1:0px}
  .f{margin-top:auto;display:flex;justify-content:flex-end;align-items:flex-end;gap:42px}.f svg{display:block;margin-bottom:1px}
  .q{display:flex;gap:3px;background:#fff;padding:2px 2px 2px 3px}`,
  `<rp-head>概要: 页面<rp-icon slot="tools" name="filter" w="9" h="8"></rp-icon><rp-icon slot="tools" name="search" w="9"></rp-icon></rp-head>
   <div class="t"><rp-row pad="4" icon="page" iw="7" bold>New Page 3</rp-row><rp-row pad="12" icon="home" iw="11" ih="11">(图片)</rp-row>
   <rp-row pad="12" icon="circle" iw="11" ih="11" on>(椭圆形)</rp-row><rp-row pad="12" icon="circle" iw="11" ih="11">(椭圆形)</rp-row><rp-row pad="12" icon="circle" iw="11" ih="11">(椭圆形)</rp-row><rp-row pad="12" icon="rect" iw="11" ih="11">(矩形)</rp-row></div>
   <div class="f"><svg width="13" height="5"><path d="M0 2q6 1.500 12-1Q9 4.500 1 4z" fill="#2f9b3a"/></svg><div class="q"><rp-icon name="card" w="9"></rp-icon><rp-icon name="person" w="9"></rp-icon><rp-icon name="wrench" w="9"></rp-icon></div></div>`);

element('rp-check', `
  :host{display:flex;align-items:center;white-space:nowrap;min-height:0}:host([on]){background:#c9f0f8}
  label{display:flex;align-items:center;gap:4px;margin-left:var(--in,0px)}span{position:relative;display:flex}
  input{appearance:none;width:9px;height:9px;margin:0;border:1px solid #999;background:linear-gradient(135deg,#ddd,#fff)}
  svg{position:absolute;left:1px;top:1px;pointer-events:none}::slotted(em){font-style:normal;color:#23864e;margin-left:-2px}`,
  a => `<label><span><input type="checkbox"${a('on', 'n') !== 'n' ? ' checked' : ''}>${a('on', 'n') !== 'n' ? '<svg width="7" height="7"><path d="M1 3l2 3 3-5" fill="none" stroke="#222" stroke-width="1.400"/></svg>' : ''}</span><slot></slot></label>`);

element('rp-dialog', `
  :host{display:flex;flex-direction:column;padding:0 5px;overflow:hidden;border:1px solid #4d5866;border-bottom:0;border-radius:5px 5px 0 0;box-shadow:0 0 5px 1px rgba(0,0,0,.55);background:linear-gradient(90deg,#b8d3f3 0 4px,transparent 4px calc(100% - 4px),#a9cbf5 0)}
  header{display:flex;align-items:flex-start;flex:none;height:18px;margin:0 -5px;padding:0 5px;font-size:8px;line-height:16px;background:rgba(90,160,235,.33);backdrop-filter:blur(2px);color:#111}
  header rp-icon{margin:3px 3px 0 1px}header span{text-shadow:0 0 3px #fff,0 0 4px #fff,0 0 5px #fff,0 0 6px #fff}
  .x{margin-left:auto;width:31px;height:12px;border:1px solid #7d3b38;border-top:0;border-radius:0 0 3px 3px;background:linear-gradient(#e5a096,#cc4a36 50%,#c23b26);padding:0;display:flex;align-items:center;justify-content:center}
  .x rp-icon{margin:0}
  .c{flex:1;min-height:0;display:flex;flex-direction:column;border:1px solid #7f8c9a;border-bottom:0;background:#f2f2f2;padding:6px 7px 0 5px}
  .top{display:flex;align-items:center;height:14px;font-size:8px}
  .top label{flex:none}.top input{margin:0 10px 0 2px;width:194px;height:14px;border:1px solid #c5c5c5;padding:0 2px;font:inherit;font-size:7px}
  .top button{width:47px;height:14px;border:1px solid #c5c5c5;background:#f4f4f4;padding:0;font:inherit;font-size:7px}
  .cols{flex:1;min-height:0;display:grid;grid-template:22px 1fr / 142fr 176fr 219fr;column-gap:7px}
  h3{margin:0;font:inherit;font-size:8px;line-height:26px}
  .p{border:1px solid #c5c5c5;border-bottom:0;background:#fff;min-width:0;overflow:hidden}
  .one{display:flex}.one .t{flex:1;display:grid;grid-auto-rows:1fr;height:217px}
  .two{display:grid;align-content:start;grid-auto-rows:14px;--g1:3px;--g2:7px;--hot:#c9f0f8}
  .three{padding:2px 2px 0;background:#fafafa;display:flex;flex-direction:column}
  .three h4{margin:0;font:inherit;font-size:8px;line-height:12px}
  .f{display:flex;align-items:center;gap:5px;height:14px;margin:1px 0 2px}.f input{width:139px;height:13px;border:1px solid #c5c5c5;padding:0 2px;margin:0;font:italic 7px/10px "Liberation Sans","Noto Sans CJK SC",sans-serif}
  .in{height:174px;flex:none;border:1px solid #c5c5c5;background:#fff;--in:14px}.in div{display:grid;grid-auto-rows:1fr;height:82px}
  .w{display:flex;align-items:center;gap:5px;margin-top:5px;font-size:7px;line-height:8px}.w label{display:flex;align-items:center;gap:3px;padding-left:3px}
  .w input{width:184px;height:12px;border:1px solid #c5c5c5;padding:0 2px;margin:0;font:inherit}`,
  `<header><rp-icon name="logo" w="10"></rp-icon><span>用例编辑&lt;隐藏时&gt;</span><button class="x" aria-label="关闭"><rp-icon name="closew" w="8" h="7"></rp-icon></button></header>
   <div class="c"><div class="top"><label for="n">用例名称</label><input id="n" value="Case 1"><button>添加条件</button></div>
   <div class="cols"><h3>添加动作</h3><h3>组织动作</h3><h3>配置动作</h3>
   <div class="p one"><div class="t">${[[4, '链接', 1], [16, '打开链接', 1], [28, '当前窗口'], [28, '新窗口/新标签'], [28, '弹出窗口'], [28, '父级窗口'], [16, '关闭窗口'], [16, '在框架中打开链接', 1], [28, '内联框架'], [28, '父级框架'], [16, '滚动到元件&lt;锚链接&gt;'], [16, '设置自适应视图'], [4, '元件', 1], [16, '显示/隐藏', 1], [28, '显示'], [28, '隐藏']].map(([p, t, c]) => `<rp-row pad="${p}"${c ? ' caret="open"' : ''}>${t}</rp-row>`).join('')}</div><rp-scroll thumb="95"></rp-scroll></div>
   <div class="p two"><rp-row pad="3" caret="open" icon="case">Case 1</rp-row><rp-row pad="16" icon="bolt" on>${action}</rp-row><rp-row pad="16" icon="bolt">显示<em>This</em></rp-row></div>
   <div class="p three"><h4>选择调整尺寸的元件</h4><div class="f"><input aria-label="查找" placeholder="查找"><rp-check>隐藏未命名的元件</rp-check></div>
   <div class="in"><div><rp-check on>当前元件<em>to 80 x 80 anchor 中心</em></rp-check><rp-check>(图片)</rp-check><rp-check>(椭圆形)</rp-check><rp-check>(椭圆形)</rp-check><rp-check>(椭圆形)</rp-check><rp-check>(矩形)</rp-check></div></div>
   <div class="w"><label>宽<input value="80"></label><i>fx</i></div></div></div></div>`);

element('rp-taskbar', `
  :host{display:flex;height:4px;flex:none;border-top:1px solid #4c5a68;background:linear-gradient(90deg,#8192a6 0 18%,#a9c9ea 30% 66%,#6b7f94 69%,#15181c 73%,#1b1d22);padding-left:38px;gap:2px;overflow:hidden}
  i{width:35px;background:#d9e2ec;border:1px solid #8392a3;border-width:0 1px;display:flex;justify-content:center}i::before{content:"";width:14px;height:8px;background:var(--c);border-radius:var(--r,0)}`,
  ['#334', '#334', '#334', '#c2342b;--r:50%', '#d8c27a', '#8d1fa5', '#5c6b7a', '#1e7fd0;--r:50%'].map(c => `<i style="--c:${c}"></i>`).join(''));

element('rp-shell', `
  :host{display:flex;flex-direction:column;height:100vh;position:relative;overflow:hidden;background:#d9d9d9}
  .app{flex:1;min-height:0;display:grid;grid-template-columns:1fr 5px}
  .win{display:flex;flex-direction:column;min-width:0;min-height:0}
  .main{flex:1;min-height:0;display:grid;grid-template-columns:223px 1fr 207px}
  .col{display:flex;flex-direction:column;min-height:0;min-width:0}
  .edge{background:linear-gradient(#b39af0 0 13px,#fafcff 20px 66px,#555a60 66px 79px,#1f86cc 79px 130px,#75838f 130px,#8d97a5 300px,#7e8794)}
  rp-dialog{position:absolute;left:182px;top:254px;width:575px;bottom:4px}
  .blob{position:absolute;right:212px;bottom:16px}
  .marks{position:absolute;left:0;top:0;pointer-events:none}
  rp-taskbar{position:relative}`,
  `<div class="app"><div class="win"><rp-title></rp-title><rp-menu></rp-menu><rp-toolbar></rp-toolbar><rp-format></rp-format>
   <div class="main"><div class="col"><rp-pages></rp-pages><rp-lib></rp-lib></div><rp-canvas></rp-canvas><div class="col"><rp-inspect></rp-inspect><rp-outline></rp-outline></div></div></div><div class="edge"></div></div>
   <svg class="blob" width="22" height="92"><path d="M22 0C8 2 0 22 0 46c0 20 4 32 10 46h12z" fill="#f3f3f3"/></svg>
   <rp-dialog></rp-dialog><rp-taskbar></rp-taskbar>
   <svg class="marks" width="1000" height="540"><path d="M308.500 235L454.500 319L455.500 317L460 325L450.500 324.500L452 321.500L308 236.500Z" fill="#df3835"/><path d="M508 319L801 223L799.500 219.500L809 221.500L802.700 228L802 226.500L760 240L640 278.500L508 320Z" fill="#df3835"/></svg>`);
</script>
</body>
</html>
